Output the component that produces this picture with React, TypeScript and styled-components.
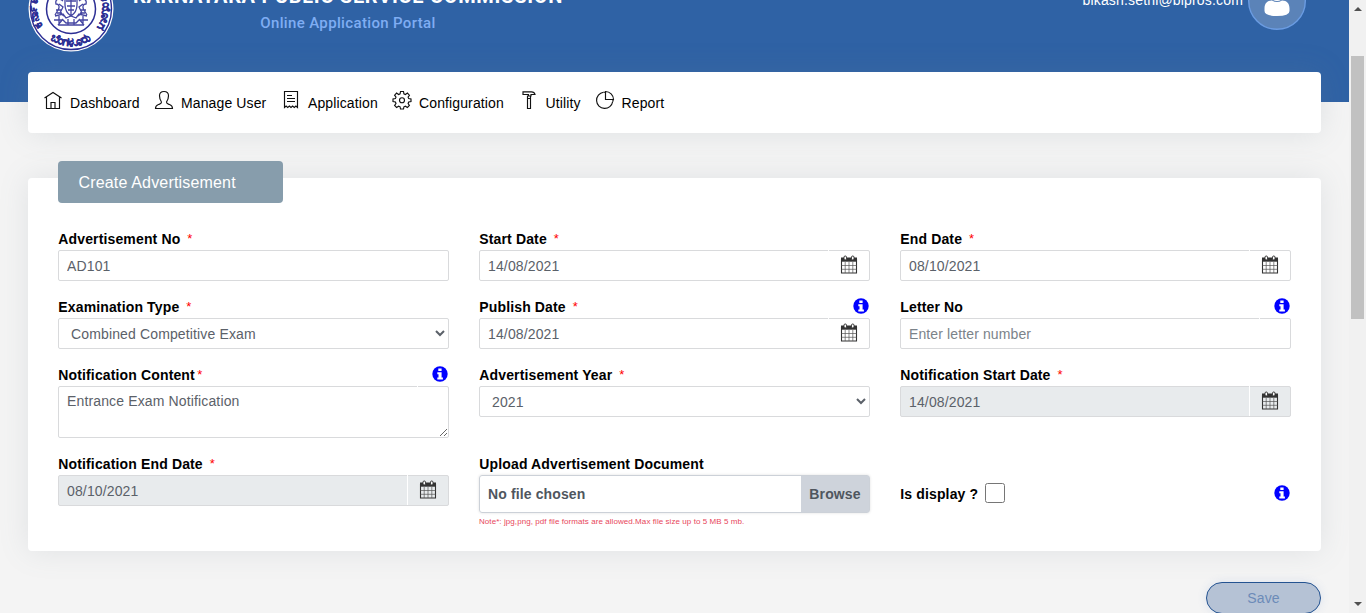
import React from "react";
import styled, { createGlobalStyle, css } from "styled-components";

const Global = createGlobalStyle`
  *, *::before, *::after { box-sizing: border-box; }
  html, body { margin: 0; background: #f4f4f4; overflow: hidden; }
  body { font-family: "Liberation Sans", Arial, sans-serif; font-size: 14px; color: #000; }
  input, select, textarea, button { font-family: inherit; }
`;

const Window = styled.div`
  display: flex;
  height: 613px;
`;
const Page = styled.main`
  flex: 1;
  min-width: 0;
  height: 613px;
  overflow: hidden;
`;
const Header = styled.header`
  display: flex;
  align-items: flex-start;
  height: 102px;
  padding: 0 43px 0 28px;
  background: #2f62a5;
`;
const Emblem = styled.svg`
  flex: none;
  width: 86px;
  height: 86px;
  margin-top: -34px;
`;
const Brand = styled.div`
  width: 430px;
  margin: -16px 0 0 19px;
  font-family: Roboto, sans-serif;
  text-align: center;
`;
const BrandName = styled.div`
  font-size: 20px;
  line-height: 24px;
  font-weight: 700;
  letter-spacing: 0.7px;
  color: #fff;
  white-space: nowrap;
`;
const BrandSub = styled.div`
  margin-top: 5px;
  font-size: 15px;
  line-height: 20px;
  font-weight: 500;
  letter-spacing: 0.35px;
  color: #7fadf3;
`;
const UserMail = styled.div`
  margin: -9px 5px 0 auto;
  font-size: 14px;
  line-height: 18px;
  letter-spacing: 0.17px;
  color: #fff;
`;
const Avatar = styled.svg`
  width: 58px;
  height: 58px;
  margin-top: -28px;
`;
const Nav = styled.nav`
  display: flex;
  height: 61px;
  margin: -30px 28px 0;
  padding: 18px 15px 0;
  border-radius: 4px;
  background: #fff;
  box-shadow: 0 0 30px rgba(115, 128, 140, 0.17);
  position: relative;
`;
const NavItem = styled.a<{ $w: number }>`
  display: flex;
  width: ${(p) => p.$w}px;
  font-size: 14px;
  line-height: 26px;
  letter-spacing: 0.12px;
  white-space: nowrap;
  svg { flex: none; width: 20px; height: 20px; margin-right: 7px; }
`;
const Card = styled.section`
  height: 373px;
  margin: 45px 28px 0;
  padding: 0 30px;
  border-radius: 4px;
  background: #fff;
  box-shadow: 0 0 30px rgba(115, 128, 140, 0.15);
`;
const Heading = styled.h1`
  position: relative;
  top: -17px;
  width: 225px;
  height: 42px;
  margin: 0;
  padding-left: 20.5px;
  border-radius: 4px;
  background: #879dac;
  color: #fff;
  font-size: 16px;
  font-weight: 400;
  line-height: 44px;
  letter-spacing: 0.17px;
`;
const Grid = styled.form`
  display: grid;
  grid-template-columns: repeat(3, 391px);
  gap: 15px 30px;
  padding-top: 8px;
`;
const Field = styled.div`
  display: flex;
  flex-direction: column;
`;
const LabelRow = styled.div`
  display: flex;
  justify-content: space-between;
  height: 22px;
`;
const Label = styled.label`
  padding-left: 0.3px;
  font-size: 14px;
  font-weight: 700;
  line-height: 22px;
  letter-spacing: 0.14px;
  white-space: nowrap;
`;
const Star = styled.span<{ $tight?: boolean }>`
  margin-left: ${(p) => (p.$tight ? 2.5 : 7)}px;
  color: #f00;
  font-size: 13px;
  font-weight: 400;
  vertical-align: 1px;
  line-height: 1;
`;
const InfoHolder = styled.span<{ $lined?: boolean }>`
  position: relative;
  display: flex;
  justify-content: flex-end;
  width: 32px;
  height: 23px;
  padding-top: 1.6px;
  padding-right: 0.6px;
  border-left: 1px solid ${(p) => (p.$lined ? "#fff" : "transparent")};
  svg { width: 16px; height: 16px; }
`;
const control = css`
  width: 100%;
  height: 31px;
  margin: 0;
  padding: 0 8px;
  border: 1px solid #d9dadc;
  border-radius: 2px;
  outline: 0;
  background: #fff;
  color: #5b6169;
  font-size: 14px;
  letter-spacing: 0.14px;
`;
const Input = styled.input`
  ${control}
  &::placeholder { color: #7b838a; opacity: 1; letter-spacing: 0.12px; }
`;
const Select = styled.select`
  ${control}
  padding: 0 0 0 8px;
`;
const TextArea = styled.textarea`
  ${control}
  display: block;
  height: 52px;
  padding: 6px 8px;
  line-height: 17px;
  resize: vertical;
`;
const DateBox = styled.div<{ $off?: boolean }>`
  ${control}
  display: flex;
  padding: 0 0 0 8px;
  line-height: 30px;
  background: ${(p) => (p.$off ? "#e8ebed" : "#fff")};
`;
const DateAddon = styled.span`
  display: flex;
  justify-content: center;
  width: 42px;
  height: 30px;
  margin: -1px -1px 0 auto;
  padding: 5px 1px 0 0;
  border-left: 1px solid #fff;
  svg { width: 18px; height: 20px; }
`;
const FileBox = styled.div`
  display: flex;
  height: 38px;
  border: 1px solid #ccd1d8;
  border-radius: 3px;
  box-shadow: 0 0 3px rgba(0, 0, 0, 0.12);
  color: #4f565e;
  font-weight: 700;
  line-height: 37px;
  letter-spacing: 0.12px;
`;
const FileName = styled.span`
  flex: 1;
  padding-left: 8px;
`;
const Browse = styled.span`
  width: 68px;
  background: #ced3db;
  text-align: center;
`;
const Note = styled.small`
  margin-top: 3px;
  color: #e8475b;
  font-size: 8px;
  line-height: 11px;
  letter-spacing: 0.07px;
`;
const CheckRow = styled.div`
  display: flex;
  align-items: flex-start;
  padding-top: 30px;
`;
const Check = styled.input`
  width: 20px;
  height: 20px;
  margin: 0 0 0 7px;
`;
const CheckInfo = styled.span`
  margin-left: auto;
  svg { display: block; width: 16px; height: 16px; margin: 1.6px 0.6px 0 0; }
`;
const Actions = styled.div`
  display: flex;
  justify-content: flex-end;
  padding: 31px 28px 0;
`;
const Save = styled.button`
  width: 115px;
  height: 32px;
  padding: 0;
  border: 1px solid #245391;
  border-radius: 16px;
  background: #b5c2d5;
  box-shadow: 0 0 10px rgba(80, 120, 200, 0.14);
  color: #6c8bb8;
  font-size: 14px;
  letter-spacing: 0.15px;
`;
const Scrollbar = styled.div`
  display: flex;
  flex-direction: column;
  align-items: center;
  width: 17px;
  height: 613px;
  background: #f1f1f1;
`;
const Thumb = styled.div`
  width: 13px;
  height: 263px;
  margin-top: 45px;
  background: #c1c1c1;
`;
const Arrow = styled.i<{ $down?: boolean }>`
  margin-top: ${(p) => (p.$down ? "auto" : "7px")};
  margin-bottom: ${(p) => (p.$down ? "7px" : 0)};
  border: 4px solid transparent;
  ${(p) => (p.$down ? "border-top-color: #505050; border-bottom: 0;" : "border-bottom-color: #505050; border-top: 0;")}
`;

const Info = () => (
  <svg viewBox="0 0 16 16">
    <circle cx="8" cy="8" r="7.7" fill="#00f" />
    <path d="M6.3 2.4h3.3v2.5H6.3zM5.3 6.2h4.3v5.4h1.3v2H5.3v-2h1.2V8.2H5.3z" fill="#fff" />
  </svg>
);
const Calendar = () => (
  <svg viewBox="0 0 18 20" fill="none" stroke="#333">
    <path d="M1.500 4.500h15v13.500h-15z" strokeWidth="1.100" />
    <path d="M1 2.500h16v4.200H1z" fill="#333" stroke="none" />
    <path d="M5.200 7v11M9 7v11M12.800 7v11M1.500 10.500h15M1.500 14.300h15" strokeWidth=".7" stroke="#555" />
    <rect x="4" y="1" width="2.500" height="4" rx="1.200" fill="#fff" />
    <rect x="11.500" y="1" width="2.500" height="4" rx="1.200" fill="#fff" />
  </svg>
);

const navItems: { text: string; w: number; icon: React.ReactNode }[] = [
  { text: "Dashboard", w: 111, icon: <path d="M1.500 8 10 2.500 18.500 8M3.500 7v11.500h13V7M8 18.500v-6h4v6" /> },
  { text: "Manage User", w: 127, icon: <path d="M7.500 12C6 10 5.500 8 5.500 5.800 5.500 3 7.500 1.500 10 1.500s4.500 1.500 4.500 4.300c0 2.200-.5 4.200-2 6.200 0 2 1 2 3 2.500 2 .6 3 2 3 4h-17c0-2 1-3.400 3-4 2-.5 3-.5 3-2.500" /> },
  { text: "Application", w: 111, icon: <path d="M3.500 1.500h13v16l-1.600-1.500-1.600 1.500-1.700-1.500-1.600 1.500-1.600-1.500-1.700 1.500-1.600-1.500-1.600 1.500zM6 5.500h5M6 8.500h8M6 11.500h8" /> },
  { text: "Configuration", w: 126.5, icon: <><path d="m8.500 1.500 3 0 .4 2.300 1.500.7 2-1.400 2 2.100-1.300 1.900.6 1.500 2.300.4v2.500l-2.300.5-.6 1.500 1.300 2-2 2-2-1.300-1.500.6-.4 2.200h-3l-.4-2.200-1.500-.6-2 1.300-2-2L4 13.500 3.400 12l-2.400-.5V9l2.400-.4L4 7.100 2.600 5.200l2-2.100 2 1.400 1.500-.7z" /><circle cx="10" cy="10.200" r="2.500" /></> },
  { text: "Utility", w: 76, icon: <path d="M4 1.800h8.500c2 0 3 .6 3.500 2.700h-4v1.500h-2.500V4.500H4zM8.500 8.500h3v10h-3zM8.500 5.500v3M11.500 5.500v3" /> },
  { text: "Report", w: 80, icon: <><path d="M8.500 2.300a8.100 8.100 0 1 0 9.200 9.200" /><path d="M8.500 2.300l2-.3M10.500 1.500v8H18.500a8 8 0 0 0-8-8zM18.300 9.500l-.6 2" /></> },
];

const DateField = ({ value, off }: { value: string; off?: boolean }) => (
  <DateBox $off={off}>
    {value}
    <DateAddon><Calendar /></DateAddon>
  </DateBox>
);

type FieldProps = { label: string; required?: boolean; tight?: boolean; info?: boolean; lined?: boolean; children: React.ReactNode };
const FormField = ({ label, required, tight, info, lined, children }: FieldProps) => (
  <Field>
    <LabelRow>
      <Label>
        {label}
        {required && <Star $tight={tight}>*</Star>}
      </Label>
      {info && <InfoHolder $lined={lined}><Info /></InfoHolder>}
    </LabelRow>
    {children}
  </Field>
);

const Seal = () => (
  <Emblem viewBox="0 0 86 86">
    <defs>
      <path id="lower" d="M7 44A36 36 0 0 0 79 44" />
      <path id="left" d="M16 61A32 32 0 0 1 14 24" />
      <path id="right" d="M62 18A31 31 0 0 1 66 64" />
    </defs>
    <circle cx="43" cy="43" r="42.500" fill="#fff" />
    <circle cx="43" cy="43" r="40.500" fill="none" stroke="#2c2e94" strokeWidth="1.400" />
    <circle cx="43" cy="43" r="24.500" fill="none" stroke="#2c2e94" strokeWidth="1.500" />
    <g fill="none" stroke="#4546a2" strokeWidth="1.300">
      <path d="M37 31h12v8c0 6-3 9-6 11-3-2-6-5-6-11zM38 35h10M39 40h8M40 44h6M43 31v18" />
      <path d="M35 35c-5-4-8-1-7 3 3 0 4 3 2 6l-3 5M51 35c5-4 8-1 7 3-3 0-4 3-2 6l3 5M31 38l4 3-3 6 4 3M55 38l-4 3 3 6-4 3M27 50l8-2 3 4 5-2 5 2 3-4 8 2M26 54h9l3 3h10l3-3h9M31 50v7M55 50v7M35 53l-5 6M51 53l5 6M40 53v6M46 53v6M30 59h26M28 44h6M52 44h6M29 47h5M52 47h5" />
    </g>
    <g fill="#2c2e94" stroke="#2c2e94" strokeWidth=".3" fontWeight="700" fontFamily="'Noto Sans', sans-serif">
      <text fontSize="12"><textPath href="#left" startOffset="2">ಕರ್ನಾಟಕ</textPath></text>
      <text fontSize="12"><textPath href="#right" startOffset="14">ಆಯೋಗ</textPath></text>
      <text fontSize="12" textAnchor="middle"><textPath href="#lower" startOffset="50%">ಬೆಂಗಳೂರು</textPath></text>
    </g>
  </Emblem>
);

export default function App() {
  return (
    <Window>
      <Global />
      <Page>
        <Header>
          <Seal />
          <Brand>
            <BrandName>KARNATAKA PUBLIC SERVICE COMMISSION</BrandName>
            <BrandSub>Online Application Portal</BrandSub>
          </Brand>
          <UserMail>bikash.sethi@bipros.com</UserMail>
          <Avatar viewBox="0 0 58 58">
            <circle cx="29" cy="29" r="28.300" fill="#5b83b8" stroke="#6b9ce2" strokeWidth="1.400" />
            <circle cx="29" cy="21" r="8" fill="#fff" />
            <path d="M24 28.500q5 3 10 0c5 0 7.500 3 7.500 8v2.500q0 5-12.500 5t-12.500-5v-2.500c0-5 2.500-8 7.500-8z" fill="#fff" />
          </Avatar>
        </Header>
        <Nav>
          {navItems.map((n) => (
            <NavItem key={n.text} $w={n.w}>
              <svg viewBox="0 0 20 20" fill="none" stroke="#111" strokeWidth="1.150">{n.icon}</svg>
              {n.text}
            </NavItem>
          ))}
        </Nav>
        <Card>
          <Heading>Create Advertisement</Heading>
          <Grid>
            <FormField label="Advertisement No" required><Input defaultValue="AD101" /></FormField>
            <FormField label="Start Date" required><DateField value="14/08/2021" /></FormField>
            <FormField label="End Date" required><DateField value="08/10/2021" /></FormField>
            <FormField label="Examination Type" required>
              <Select><option>Combined Competitive Exam</option></Select>
            </FormField>
            <FormField label="Publish Date" required info><DateField value="14/08/2021" /></FormField>
            <FormField label="Letter No" info lined><Input placeholder="Enter letter number" /></FormField>
            <FormField label="Notification Content" required tight info lined>
              <TextArea defaultValue="Entrance Exam Notification" />
            </FormField>
            <FormField label="Advertisement Year" required>
              <Select><option>2021</option></Select>
            </FormField>
            <FormField label="Notification Start Date" required><DateField value="14/08/2021" off /></FormField>
            <FormField label="Notification End Date" required><DateField value="08/10/2021" off /></FormField>
            <FormField label="Upload Advertisement Document">
              <FileBox><FileName>No file chosen</FileName><Browse>Browse</Browse></FileBox>
              <Note>Note*: jpg,png, pdf file formats are allowed.Max file size up to 5 MB 5 mb.</Note>
            </FormField>
            <CheckRow>
              <Label>Is display ?</Label>
              <Check type="checkbox" />
              <CheckInfo><Info /></CheckInfo>
            </CheckRow>
          </Grid>
        </Card>
        <Actions><Save type="button">Save</Save></Actions>
      </Page>
      <Scrollbar><Arrow /><Thumb /><Arrow $down /></Scrollbar>
    </Window>
  );
}
